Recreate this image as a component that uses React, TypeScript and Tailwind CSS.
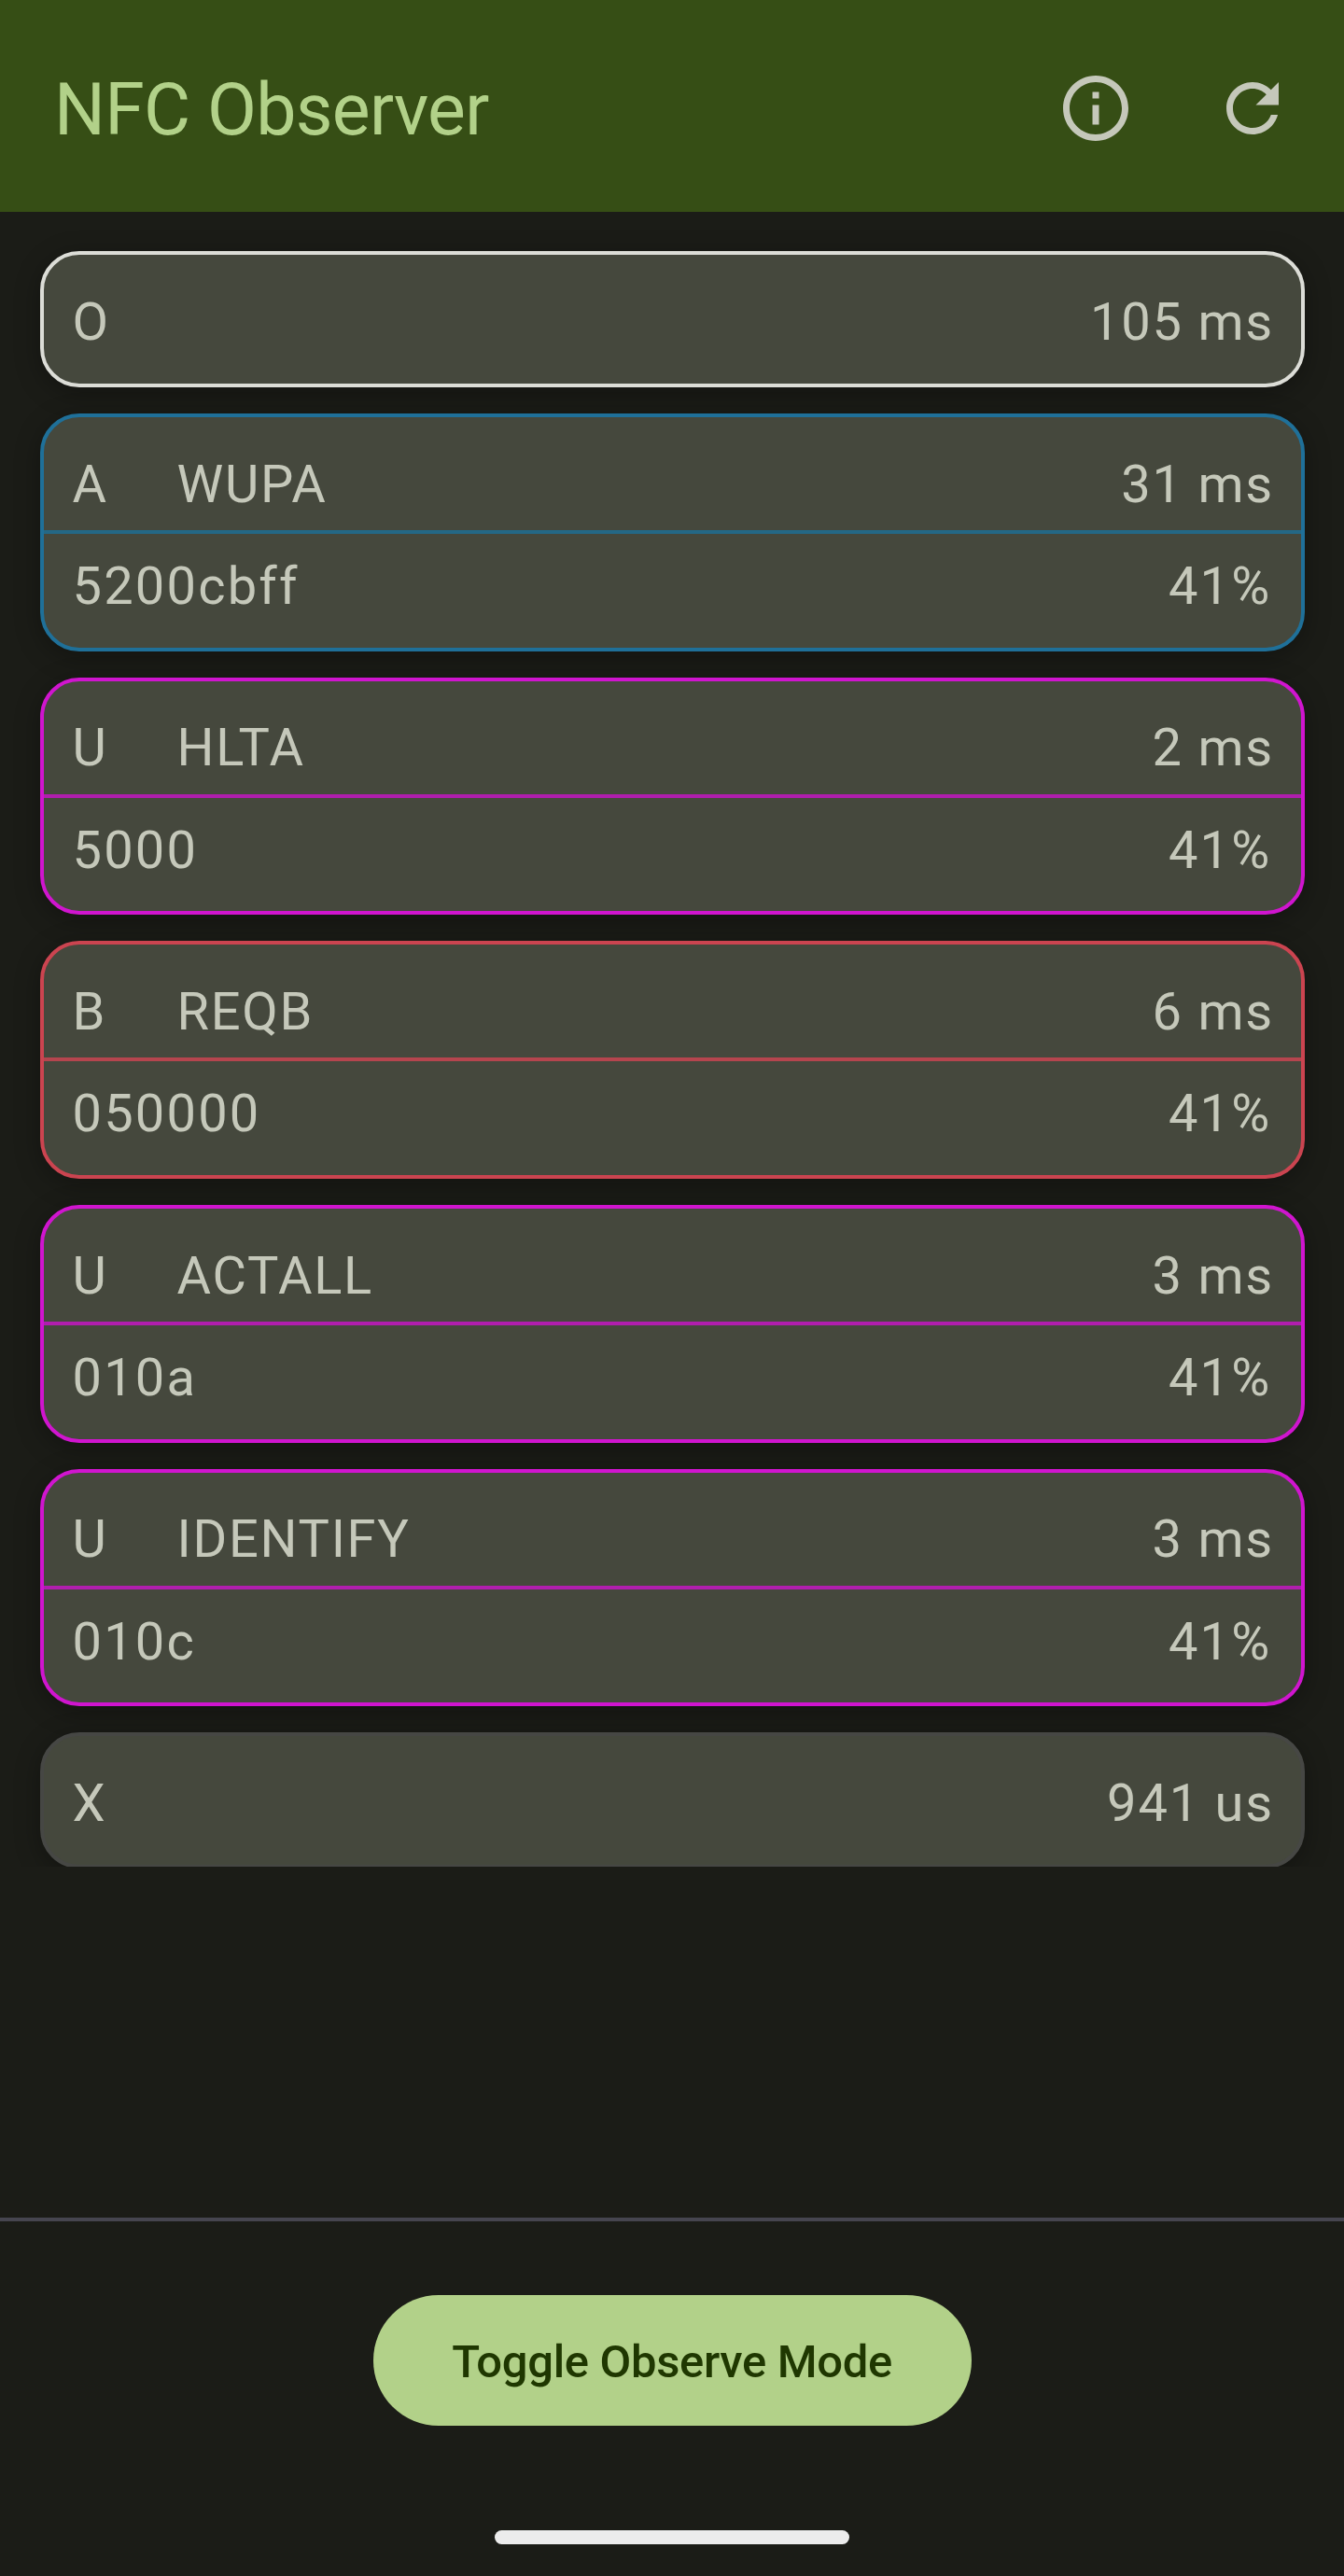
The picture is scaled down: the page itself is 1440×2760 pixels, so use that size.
import React from "react";

type Entry = {
  type: string;
  time: string;
  name?: string;
  data?: string;
  gain?: string;
  border: string;
  line?: string;
};

const BLUE = { border: "border-[#1f7099]", line: "bg-[#246886]" };
const MAGENTA = { border: "border-[#d015cf]", line: "bg-[#b01eae]" };
const RED = { border: "border-[#cb4450]", line: "bg-[#b5454e]" };

const entries: Entry[] = [
  { type: "O", time: "105 ms", border: "border-[#dcddd7]" },
  { type: "A", name: "WUPA", time: "31 ms", data: "5200cbff", gain: "41%", ...BLUE },
  { type: "U", name: "HLTA", time: "2 ms", data: "5000", gain: "41%", ...MAGENTA },
  { type: "B", name: "REQB", time: "6 ms", data: "050000", gain: "41%", ...RED },
  { type: "U", name: "ACTALL", time: "3 ms", data: "010a", gain: "41%", ...MAGENTA },
  { type: "U", name: "IDENTIFY", time: "3 ms", data: "010c", gain: "41%", ...MAGENTA },
  { type: "X", time: "941 us", border: "border-[#464744]" },
];

function Card({ e }: { e: Entry }) {
  return (
    <div
      className={`flex shrink-0 flex-col rounded-[42px] border-4 bg-[#45483d] shadow-[0_6px_28px_rgba(0,0,0,0.3)] ${e.border} ${
        e.data ? "h-[254.7px]" : "h-[146px]"
      }`}
    >
      <div className="flex h-[121px] shrink-0 items-start pt-[29.5px] pr-[28.5px] pl-[31px] leading-[84px]">
        <span className="w-[112px]">{e.type}</span>
        <span className="flex-1">{e.name}</span>
        <span className="tracking-[1.8px]">{e.time}</span>
      </div>
      {e.data && (
        <>
          <div className={`h-1 shrink-0 ${e.line}`} />
          <div className="flex items-start justify-between pt-[14px] pr-[31px] pl-[31px] leading-[84px] tracking-[2.2px]">
            <span>{e.data}</span>
            <span>{e.gain}</span>
          </div>
        </>
      )}
    </div>
  );
}

export default function App() {
  return (
    <div className="flex h-[2760px] w-[1440px] flex-col overflow-hidden bg-[#1b1c17] font-[Roboto,sans-serif] text-[#c5c8ba]">
      <header className="flex h-[227px] shrink-0 items-center justify-between bg-[#364e15] pr-[14px] pl-[58px]">
        <h1 className="pt-2 text-[77px] leading-[98px] font-normal tracking-[-0.7px] text-[#b2d189]">NFC Observer</h1>
        <div className="flex pt-1">
          <button className="flex size-[168px] items-center justify-center" aria-label="Info">
            <svg viewBox="0 0 24 24" className="size-[84px]" fill="currentColor">
              <path d="M11 7h2v2h-2zm0 4h2v6h-2zm1-9C6.48 2 2 6.48 2 12s4.48 10 10 10 10-4.48 10-10S17.52 2 12 2zm0 18c-4.41 0-8-3.59-8-8s3.59-8 8-8 8 3.59 8 8-3.59 8-8 8z" />
            </svg>
          </button>
          <button className="flex size-[168px] items-center justify-center" aria-label="Refresh">
            <svg viewBox="0 0 24 24" className="size-[84px]" fill="currentColor">
              <path d="M17.65 6.35C16.2 4.9 14.21 4 12 4c-4.42 0-7.99 3.58-7.99 8s3.57 8 7.99 8c3.73 0 6.84-2.55 7.73-6h-2.08c-.82 2.33-3.04 4-5.65 4-3.31 0-6-2.69-6-6s2.69-6 6-6c1.66 0 3.14.69 4.22 1.78L13 11h7V4l-2.35 2.35z" />
            </svg>
          </button>
        </div>
      </header>

      <main className="flex h-[1773px] shrink-0 flex-col gap-7 overflow-hidden px-[42.5px] pt-[42px] text-[56px] tracking-[1.75px]">
        {entries.map((e, i) => (
          <Card key={i} e={e} />
        ))}
      </main>

      <footer className="mt-auto flex h-[384px] shrink-0 flex-col items-center border-t-4 border-[#46454f]">
        <button className="mt-[78.5px] h-[140px] w-[641px] rounded-full bg-[#b2d189] pt-[5px] text-[49px] leading-[70px] font-medium tracking-[-0.35px] text-[#1f3701]">
          Toggle Observe Mode
        </button>
        <div className="mt-[112px] h-[15px] w-[380px] rounded-full bg-[#ececec]" />
      </footer>
    </div>
  );
}
